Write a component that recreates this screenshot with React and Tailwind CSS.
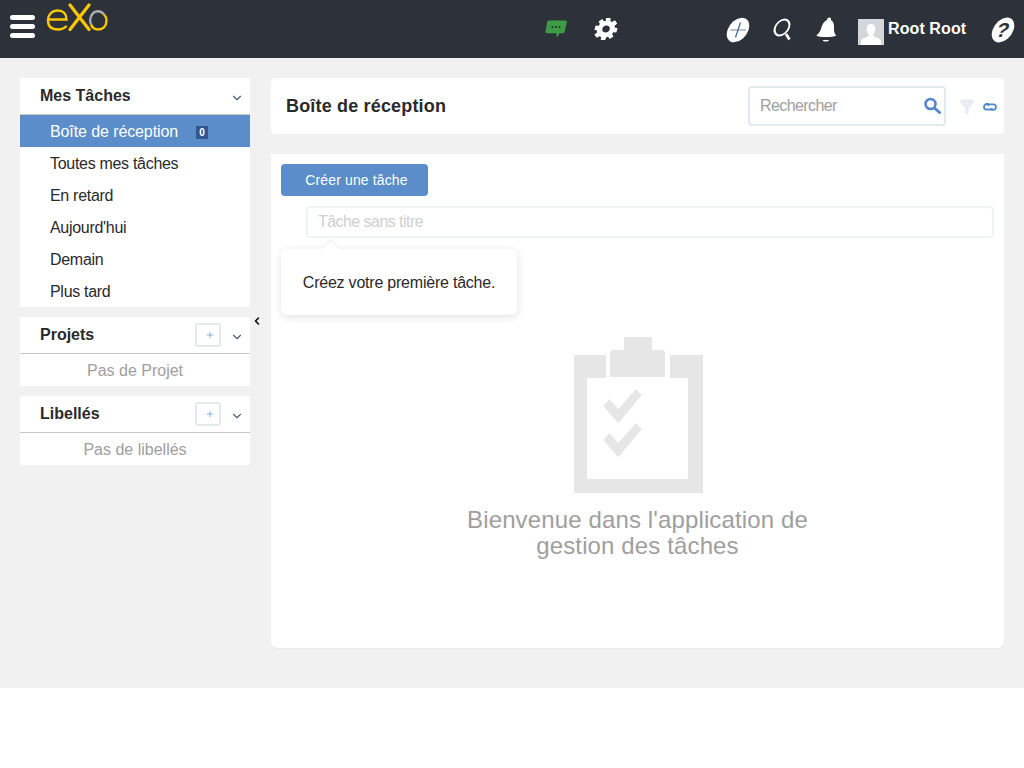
import React from "react";
import { ChevronDown, ChevronLeft, Plus } from "lucide-react";

const taskFilters = ["Toutes mes tâches", "En retard", "Aujourd'hui", "Demain", "Plus tard"];

const Logo = () => (
  <svg width="62" height="30" viewBox="0 0 62 30" fill="none" className="ml-[11px] mt-[3px] shrink-0">
    <path d="M2.5 16.5H20.5C20.5 11 17 7.500 12 7.500C6 7.500 2 11.500 2 17.500C2 23.500 6 26.500 12 26.500C15.500 26.500 18 25.500 20 23.500" stroke="#fdc700" strokeWidth="2.400" strokeLinecap="round" />
    <path d="M24 2L43 26.500M43 2L24 26.500" stroke="#fdc700" strokeWidth="3.200" strokeLinecap="round" />
    <path d="M44.800 14C44 16 44 19 45 21.500" stroke="#a9abad" strokeWidth="2.400" />
    <path d="M44.800 14C46 10.800 48.500 8.300 52 8.300C54.500 8.300 56.500 9.500 58 11.500" stroke="#a9abad" strokeWidth="2.400" />
    <path d="M45 21.500C46.500 25 49 26.500 52 26.500C57 26.500 60.500 23 60.500 17.500C60.500 15.500 59.500 13 58 11.500" stroke="#fdc700" strokeWidth="2.400" />
  </svg>
);

const ChatIcon = () => (
  <svg width="22" height="18" viewBox="0 0 22 18">
    <path d="M4 0.500H20.500C21.500 0.500 22 1.200 21.800 2.200L19.800 11.500C19.500 12.700 18.800 13.200 17.700 13.200H14.500L12 17.500L11.200 13.200H2C0.800 13.200 0.200 12.500 0.500 11.300L2.200 2C2.400 1 3 0.500 4 0.500Z" fill="#3f9c46" />
    <circle cx="7.500" cy="7" r="1.100" fill="#2d323a" />
    <circle cx="11" cy="7" r="1.100" fill="#2d323a" />
    <circle cx="14.500" cy="7" r="1.100" fill="#2d323a" />
  </svg>
);

const GearIcon = () => (
  <svg width="24" height="24" viewBox="0 0 24 24">
    <path
      transform="translate(12 12) skewX(-8) translate(-12 -12)"
      fillRule="evenodd"
      fill="#fff"
      d="M10.500 1H15L15.300 4.200L17 5L19.700 3.300L22.500 6.500L20.200 8.700L20.600 10.500L23.500 11.200L22.800 15.400L19.700 15.300L18.800 16.900L20.500 19.500L17.200 22L15.200 19.800L13.400 20.200L12.700 23H8.300L8.200 20L6.500 19.200L3.900 20.800L1.200 17.500L3.500 15.400L3.200 13.600L0.500 12.800L1.200 8.600L4.300 8.700L5.200 7.100L3.600 4.500L6.900 2L8.900 4.300L10.600 3.900Z M12 8.500C9.800 8.500 8.300 10 8.300 12C8.300 14 9.800 15.500 12 15.500C14.200 15.500 15.800 14 15.800 12C15.800 10 14.200 8.500 12 8.500Z"
    />
  </svg>
);

const PlusBubbleIcon = () => (
  <svg width="26" height="26" viewBox="0 0 26 26">
    <ellipse rx="10.500" ry="12.300" fill="#fff" transform="translate(13 13) skewX(-18)" />
    <path d="M5.500 13H21" stroke="#9aa3ad" strokeWidth="1.300" />
    <path d="M15.500 5.500L10.500 20.500" stroke="#4a6a94" strokeWidth="1.300" />
  </svg>
);

const SearchTopIcon = () => (
  <svg width="22" height="24" viewBox="0 0 22 24" fill="none">
    <ellipse rx="7" ry="8" stroke="#fff" strokeWidth="2" transform="translate(10 10.500) skewX(-18)" />
    <path d="M14 17L17.500 22.500" stroke="#fff" strokeWidth="2.800" />
  </svg>
);

const BellIcon = () => (
  <svg width="24" height="26" viewBox="0 0 24 26">
    <g transform="translate(12 13) skewX(-8) translate(-12 -13)">
      <path d="M12.500 0.500C14 0.500 14.700 1.500 14.500 3C17.500 4.500 18.500 7.500 18.700 11C18.900 14 20 16.500 22 18.500C19 20.500 5 20.500 2 18.500C4.500 16.500 5.500 14 6 11C6.500 7.500 7.500 4.500 10.500 3C10.500 1.500 11.300 0.500 12.500 0.500Z" fill="#fff" />
      <path d="M9 23H15.500C14.800 25 10 25 9 23Z" fill="#fff" />
    </g>
  </svg>
);

const AvatarIcon = () => (
  <svg width="26" height="26" viewBox="0 0 26 26" className="shrink-0">
    <rect width="26" height="26" fill="#d4d7da" />
    <path d="M13 5C16 5 17.500 7.500 17.300 10.500C17.200 12.500 16.300 14.200 15.300 15.200V17C17 18.500 22 19 23 21.500V26H3V21.500C4 19 9 18.500 10.700 17V15.200C9.700 14.200 8.800 12.500 8.700 10.500C8.500 7.500 10 5 13 5Z" fill="#fff" />
  </svg>
);

const HelpIcon = () => (
  <svg width="28" height="26" viewBox="0 0 28 26">
    <g transform="translate(14 13) skewX(-18)">
      <ellipse rx="10.500" ry="12.500" fill="#fff" />
      <text x="0" y="7" textAnchor="middle" fontFamily="Liberation Sans, sans-serif" fontWeight="700" fontSize="20" fill="#2d323a">?</text>
    </g>
  </svg>
);

const SearchBlueIcon = () => (
  <svg width="18" height="18" viewBox="0 0 18 18" fill="none">
    <circle cx="7.500" cy="7" r="5" stroke="#5389c9" strokeWidth="2.600" />
    <path d="M11.500 11L16.500 15.500" stroke="#5389c9" strokeWidth="3" strokeLinecap="round" />
  </svg>
);

const FunnelIcon = () => (
  <svg width="16" height="16" viewBox="0 0 16 16">
    <path d="M0.500 1.500C4 0 12 0 15.500 1C15 5 11 7 10 9.500L9.500 14C8.500 15.500 7 15.500 6.500 14.500V9.500C5.500 7 2 5 0.500 1.500Z" fill="#e8edf1" />
  </svg>
);

const LinkIcon = () => (
  <svg width="14" height="10" viewBox="0 0 14 10" fill="none">
    <path d="M6 2H4C2 2 1 3.200 1 5C1 6.500 2 7.500 3.500 7.500H7C8 7.500 8.800 6.800 8.800 6" stroke="#5389c9" strokeWidth="1.800" />
    <path d="M8 7.800H10C12 7.800 13 6.600 13 5C13 3.400 12 2.300 10.500 2.300H7C6 2.300 5.200 3 5.200 3.900" stroke="#5389c9" strokeWidth="1.800" />
  </svg>
);

const ClipboardIcon = () => (
  <svg width="130" height="158" viewBox="0 0 130 158" className="shrink-0">
    <path d="M1 19H33V42H14V143H115V42H97V19H130V157H1Z" fill="#e6e6e6" />
    <path d="M51 1H79V14H89C91 14 92 15.500 92 17V41H37V17C37 15.500 38 14 40 14H51Z" fill="#e6e6e6" />
    <path d="M36.300 63L30.300 70L45.300 87.300L68.700 59L63 53.300L45.300 73Z" fill="#e6e6e6" />
    <path d="M36.300 97L30.300 104L45.300 121.300L68.700 93L63 87.300L45.300 107Z" fill="#e6e6e6" />
  </svg>
);

const SectionHeader = ({ title, withAdd }) => (
  <div className="flex h-[37px] items-center border-b border-[#c8c8c8] pl-5 pr-[6px]">
    <span className="flex-1 text-base font-bold text-[#2a2a2a]">{title}</span>
    {withAdd && (
      <span className="mr-[9px] flex h-6 w-[26px] shrink-0 items-center justify-center rounded-[3px] border-2 border-[#e3e9ef] pl-1 text-[#5389c9]">
        <Plus size={10} strokeWidth={1.500} />
      </span>
    )}
    <ChevronDown size={14} strokeWidth={2} className="mt-[3px] shrink-0 text-[#4a6078]" />
  </div>
);

const EmptySection = ({ title, empty }) => (
  <section className="bg-white">
    <SectionHeader title={title} withAdd />
    <div className="flex h-8 items-center justify-center pt-0.5 text-base text-[#a09e9e]">{empty}</div>
  </section>
);

export default function App() {
  return (
    <div className="min-h-[768px] bg-white font-['Liberation_Sans',Arial,sans-serif] text-[#2a2a2a]">
      <header className="flex h-[58px] items-start bg-[#2d323a]">
        <div className="ml-2.5 mt-[15px] flex w-[25px] flex-col gap-1">
          <span className="h-[5px] rounded-sm bg-white" />
          <span className="h-[5px] rounded-sm bg-white" />
          <span className="h-[5px] rounded-sm bg-white" />
        </div>
        <Logo />
        <div className="ml-[437px] mt-[20px]"><ChatIcon /></div>
        <div className="ml-[27px] mt-[17px]"><GearIcon /></div>
        <div className="ml-[107px] mt-[17px]"><PlusBubbleIcon /></div>
        <div className="ml-[21px] mt-[17px]"><SearchTopIcon /></div>
        <div className="ml-[21px] mt-[17px]"><BellIcon /></div>
        <div className="ml-[19px] mt-[19px] flex items-start gap-1">
          <AvatarIcon />
          <span className="text-base font-bold leading-5 tracking-[0.1px] text-white">Root Root</span>
        </div>
        <div className="ml-[23px] mt-[17px]"><HelpIcon /></div>
      </header>

      <div className="flex h-[630px] items-start bg-[#f1f1f1] pl-5 pt-5">
        <aside className="flex w-[230px] shrink-0 flex-col gap-2.5">
          <section className="bg-white pb-0">
            <SectionHeader title="Mes Tâches" />
            <div className="flex h-8 items-center bg-[#5a8dc9] pl-[30px] pt-0.5 text-base tracking-[-0.1px] text-white">
              <span>Boîte de réception</span>
              <span className="ml-[18px] flex h-[13px] w-3 items-center justify-center bg-[#33568c] text-[10px] font-bold text-white">0</span>
            </div>
            {taskFilters.map((filter) => (
              <div key={filter} className="flex h-8 items-center pl-[30px] pt-0.5 text-base tracking-[-0.3px]">{filter}</div>
            ))}
          </section>
          <EmptySection title="Projets" empty="Pas de Projet" />
          <EmptySection title="Libellés" empty="Pas de libellés" />
        </aside>

        <div className="mt-[237px] flex w-[21px] shrink-0 justify-center">
          <ChevronLeft size={12} strokeWidth={3} className="-ml-[7px] text-black" />
        </div>

        <main className="flex w-[733px] shrink-0 flex-col gap-5">
          <div className="flex h-14 items-center rounded-sm bg-white pl-[15px] pr-[7px]">
            <h1 className="flex-1 text-lg font-bold tracking-[0.17px] text-[#2a2a2a]">Boîte de réception</h1>
            <div className="flex h-10 w-[198px] items-center rounded border-2 border-[#e3e9ef] pl-2.5 pr-[3px]">
              <span className="flex-1 text-base tracking-[-0.6px] text-[#a09e9e]">Rechercher</span>
              <SearchBlueIcon />
            </div>
            <div className="ml-[13px] mt-[2px]"><FunnelIcon /></div>
            <div className="ml-[8px] mt-[2px] flex"><LinkIcon /></div>
          </div>

          <div className="flex h-[494px] flex-col rounded-b-md bg-white pl-2.5 pr-2.5 pt-2.5 shadow-[0_1px_1px_rgba(0,0,0,0.05)]">
            <button className="flex h-8 w-[147px] items-center justify-center rounded-sm bg-[#5a8dc9] pl-1 text-sm tracking-[0.13px] text-white">
              Créer une tâche
            </button>
            <div className="relative ml-[25px] mt-[10px] flex h-8 items-center rounded border-2 border-[#f0f3f6] pl-2.5 text-base tracking-[-0.55px] text-[#d0cfcf]">
              Tâche sans titre
              <div className="absolute -bottom-[13px] -left-[27px] z-10 flex h-[66px] w-[236px] translate-y-full items-center justify-center rounded-md bg-white pt-0.5 text-base tracking-[-0.22px] text-[#2a2a2a] shadow-[0_2px_10px_rgba(0,0,0,0.12)]">
                <span className="absolute -top-[7px] left-[43px] h-3.5 w-3.5 rotate-45 border-l border-t border-[#eef1f4] bg-white" />
                Créez votre première tâche.
              </div>
            </div>
            <div className="ml-[-10px] mr-[-10px] mt-[98px] flex flex-col items-center">
              <ClipboardIcon />
              <p className="mt-[13px] text-center text-2xl leading-[26px] tracking-[0.13px] text-[#a09e9e]">
                Bienvenue dans l'application de<br />gestion des tâches
              </p>
            </div>
          </div>
        </main>
      </div>
    </div>
  );
}
